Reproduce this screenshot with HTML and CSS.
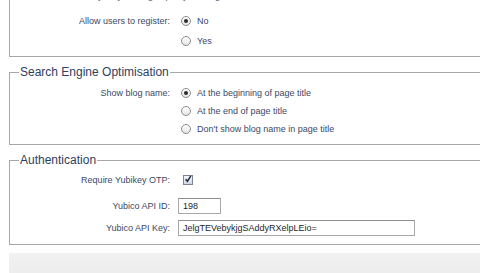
FILE: index.html
```html
<!DOCTYPE html>
<html lang="en">
<head>
<meta charset="utf-8">
<title>Blog settings</title>
<link rel="stylesheet" href="styles.css">
</head>
<body>
<div class="page">
  <fieldset class="group group-first">
    <p class="hint">Decide whether anybody can sign up to your blog here.</p>
    <div class="row">
      <span class="label">Allow users to register:</span>
      <div class="choices">
        <label class="choice"><span class="radio checked"></span>No</label>
        <label class="choice"><span class="radio"></span>Yes</label>
      </div>
    </div>
  </fieldset>

  <fieldset class="group group-seo">
    <legend>Search Engine Optimisation</legend>
    <div class="row">
      <span class="label label-tight">Show blog name:</span>
      <div class="choices choices-tight">
        <label class="choice"><span class="radio checked"></span>At the beginning of page title</label>
        <label class="choice"><span class="radio"></span>At the end of page title</label>
        <label class="choice"><span class="radio"></span>Don't show blog name in page title</label>
      </div>
    </div>
  </fieldset>

  <fieldset class="group group-auth">
    <legend>Authentication</legend>
    <div class="row row-check">
      <span class="label">Require Yubikey OTP:</span>
      <span class="checkbox"><svg viewBox="0 0 10 10" width="10" height="10"><path d="M2 5.2 L4.3 7.8 L8.6 1.2" fill="none" stroke="#1d2433" stroke-width="1.8"/></svg></span>
    </div>
    <div class="row row-field">
      <span class="label">Yubico API ID:</span>
      <span class="input input-short">198</span>
    </div>
    <div class="row row-field row-field-last">
      <span class="label">Yubico API Key:</span>
      <span class="input input-long">JelgTEVebykjgSAddyRXelpLEio=</span>
    </div>
  </fieldset>

  <div class="actions"></div>
</div>
</body>
</html>
```

FILE: styles.css
```css
html, body {
  margin: 0;
  padding: 0;
  background: #ffffff;
}

body {
  width: 480px;
  height: 273px;
  overflow: hidden;
  font-family: "Liberation Sans", Arial, Helvetica, sans-serif;
  font-size: 9px;
  color: #3b4966;
}

.page {
  width: 620px;
  margin-left: 9px;
}

.group {
  margin: 0;
  padding: 0 0 7px 0;
  border: 1px solid #a8a8a8;
  min-width: 0;
}

.group legend {
  font-size: 12px;
  line-height: 14px;
  color: #2e3e5e;
  padding: 0 1px;
  margin-left: 9px;
}

.group-first {
  margin-top: -12px;
  padding-bottom: 5px;
}

.hint {
  margin: 1px 0 9px 13px;
  height: 12px;
  line-height: 12px;
  white-space: nowrap;
  color: #4a5670;
}

.group-seo,
.group-auth {
  margin-top: 8px;
}

.group-seo {
  padding-top: 5px;
  padding-bottom: 6px;
}

.group-auth {
  padding-top: 4px;
  padding-bottom: 8px;
}

.row {
  display: grid;
  grid-template-columns: 160px auto;
  column-gap: 8px;
  align-items: start;
}

.label {
  text-align: right;
  line-height: 20px;
  white-space: nowrap;
}

.label-tight {
  line-height: 18px;
}

.choices {
  display: flex;
  flex-direction: column;
}

.choice {
  display: flex;
  align-items: center;
  height: 20px;
  white-space: nowrap;
}

.choices-tight .choice {
  height: 18px;
}

.radio {
  box-sizing: border-box;
  width: 10px;
  height: 10px;
  margin: 0 6px 0 3px;
  border: 1px solid #8c8c8c;
  border-radius: 50%;
  background: linear-gradient(#ffffff, #e4e4e4);
  display: flex;
  align-items: center;
  justify-content: center;
  flex: none;
}

.radio.checked::after {
  content: "";
  width: 4px;
  height: 4px;
  border-radius: 50%;
  background: #2a2a2a;
}

.row-check {
  align-items: center;
  height: 18px;
}

.row-check .label {
  line-height: 18px;
}

.checkbox {
  box-sizing: border-box;
  width: 10px;
  height: 10px;
  margin-left: 5px;
  border: 1px solid #7d8594;
  background: linear-gradient(#f4f7fb, #cfd8e6);
  display: flex;
  align-items: center;
  justify-content: center;
}

.checkbox svg {
  display: block;
  margin-top: -2px;
}

.row-field {
  align-items: center;
  margin-top: 9px;
}

.row-field .label {
  line-height: 16px;
}

.row-field-last {
  margin-top: 6px;
}

.input {
  box-sizing: border-box;
  height: 16px;
  line-height: 14px;
  padding: 0 4px;
  border: 1px solid #a9a9a9;
  border-top-color: #8f8f8f;
  background: #ffffff;
  color: #1f1f1f;
  white-space: nowrap;
  overflow: hidden;
}

.input-short {
  width: 43px;
}

.input-long {
  width: 237px;
}

.actions {
  margin-top: 8px;
  height: 30px;
  background: linear-gradient(#f2f2f2, #ebebeb);
}
```
